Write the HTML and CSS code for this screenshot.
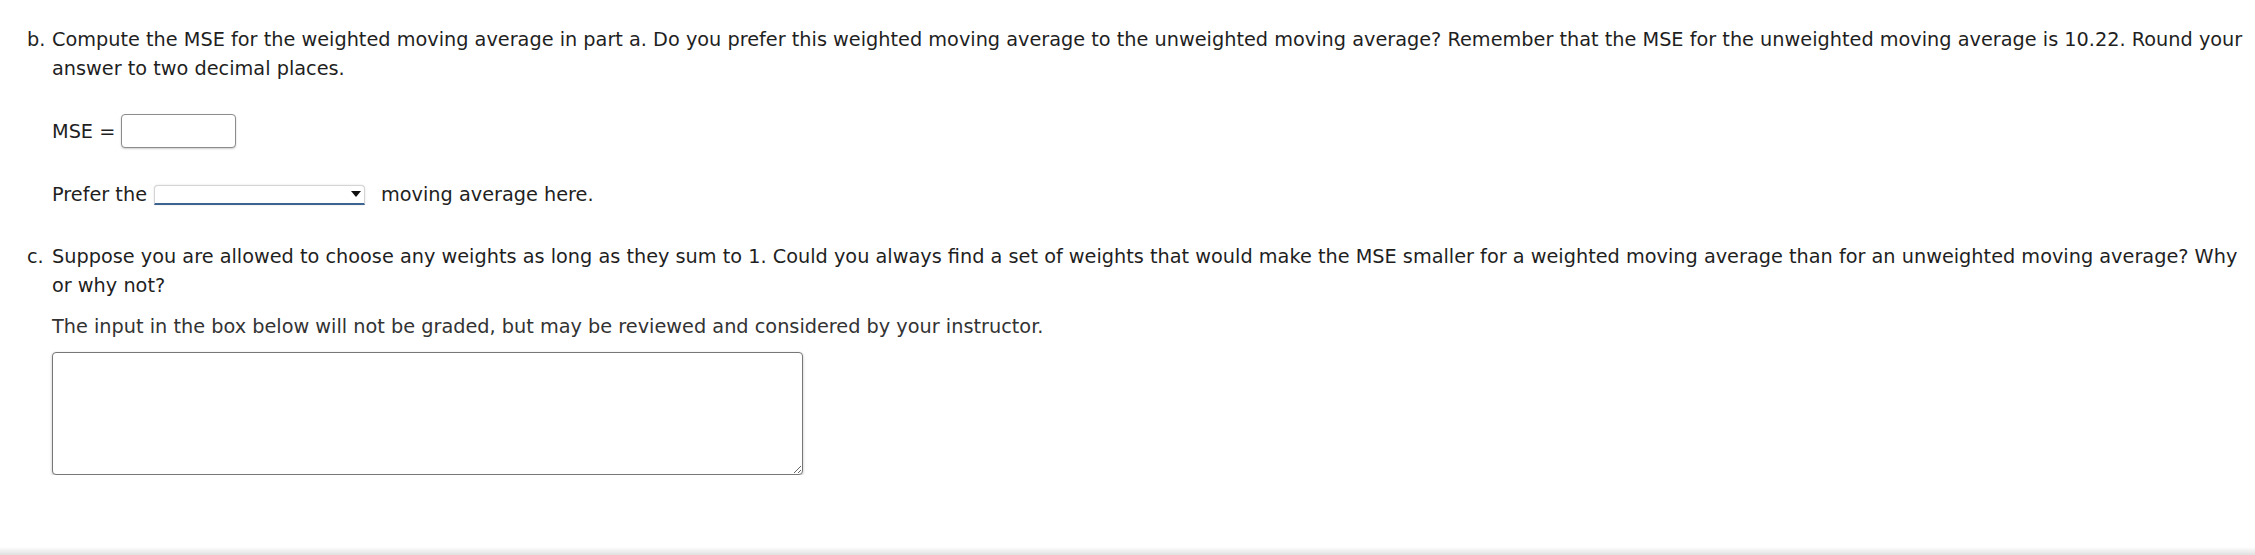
FILE: index.html
```html
<!DOCTYPE html>
<html>
<head>
<meta charset="utf-8">
<link rel="stylesheet" href="styles.css">
</head>
<body>
<div class="page">
  <div class="part part-b">
    <span class="marker">b.</span>
    <div class="content">
      <p class="q">Compute the MSE for the weighted moving average in part a. Do you prefer this weighted moving average to the unweighted moving average? Remember that the MSE for the unweighted moving average is 10.22. Round your answer to two decimal places.</p>
      <div class="row mse-row">
        <span>MSE =</span>
        <input class="num" type="text">
      </div>
      <div class="row prefer-row">
        <span>Prefer the</span>
        <span class="select"><span class="arrow"></span></span>
        <span class="after">moving average here.</span>
      </div>
    </div>
  </div>
  <div class="part part-c">
    <span class="marker">c.</span>
    <div class="content">
      <p class="q">Suppose you are allowed to choose any weights as long as they sum to 1. Could you always find a set of weights that would make the MSE smaller for a weighted moving average than for an unweighted moving average? Why or why not?</p>
      <p class="note">The input in the box below will not be graded, but may be reviewed and considered by your instructor.</p>
      <textarea class="answer"></textarea>
    </div>
  </div>
</div>
<div class="footer-shadow"></div>
</body>
</html>
```

FILE: styles.css
```css
html, body {
  margin: 0;
  padding: 0;
  background: #fff;
}
body {
  font-family: "DejaVu Sans", Verdana, sans-serif;
  font-size: 19.3px;
  color: #1f1f1f;
  line-height: 29px;
}
.page {
  padding: 25px 5px 0 27px;
}
.part {
  display: flex;
}
.marker {
  width: 25px;
  flex: none;
}
.content {
  flex: 1;
}
.q {
  margin: 0;
}
.row {
  display: flex;
  align-items: center;
}
.mse-row {
  margin-top: 31px;
  gap: 6px;
}
.num {
  width: 115px;
  height: 34px;
  box-sizing: border-box;
  border: 1px solid #8c8c8c;
  border-radius: 4px;
  box-shadow: 0 1px 2px rgba(0,0,0,0.2);
  margin: 0;
  padding: 0 6px;
  font: inherit;
}
.prefer-row {
  margin-top: 32px;
  height: 29px;
}
.select {
  margin-left: 7px;
  width: 211px;
  height: 20px;
  box-sizing: border-box;
  border: 1px solid #d4d4d4;
  border-bottom: 2px solid #3d6391;
  border-radius: 4px 4px 0 0;
  box-shadow: 0 0 2px rgba(0,0,0,0.15);
  display: flex;
  align-items: center;
  justify-content: flex-end;
  padding-right: 3px;
  background: #fff;
}
.arrow {
  width: 0;
  height: 0;
  border-left: 5px solid transparent;
  border-right: 5px solid transparent;
  border-top: 6px solid #111;
}
.after {
  margin-left: 16px;
}
.part-c {
  margin-top: 33px;
}
.note {
  margin: 12px 0 0;
  color: #333;
}
.answer {
  display: block;
  margin-top: 11px;
  width: 751px;
  height: 123px;
  box-sizing: border-box;
  border: 1px solid #777;
  border-radius: 4px;
  box-shadow: 0 1px 3px rgba(0,0,0,0.25);
  font: inherit;
  resize: both;
}
.footer-shadow {
  position: fixed;
  left: 0;
  right: 0;
  bottom: 0;
  height: 8px;
  background: linear-gradient(to bottom, rgba(0,0,0,0), rgba(0,0,0,0.12));
}
```
